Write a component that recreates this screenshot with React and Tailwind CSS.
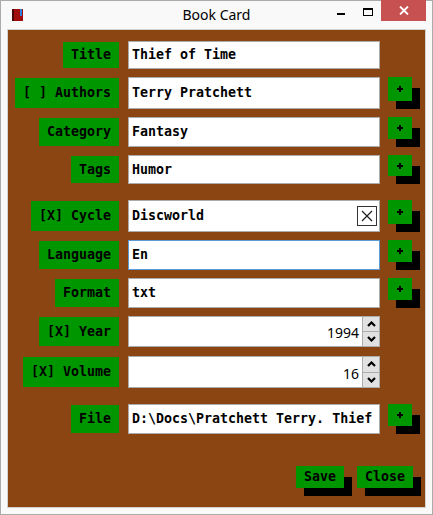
import React from 'react';

const mono = "font-['DejaVu_Sans_Mono','Liberation_Mono',monospace] font-bold text-[13.3px]";

const rows = [
  { label: 'Title', value: 'Thief of Time', h: 'h-[28px]', mt: '' },
  { label: '[ ] Authors', value: 'Terry Pratchett', h: 'h-[32px]', mt: 'mt-[8px]', plus: true },
  { label: 'Category', value: 'Fantasy', h: 'h-[30px]', mt: 'mt-[8px]', plus: true },
  { label: 'Tags', value: 'Humor', h: 'h-[29px]', mt: 'mt-[8px]', plus: true },
  { label: '[X] Cycle', value: 'Discworld', h: 'h-[32px]', mt: 'mt-[16px]', plus: true, clear: true },
  { label: 'Language', value: 'En', h: 'h-[30px]', mt: 'mt-[8px]', plus: true, focus: true },
  { label: 'Format', value: 'txt', h: 'h-[30px]', mt: 'mt-[8px]', plus: true },
  { label: '[X] Year', num: '1994', h: 'h-[31px]', mt: 'mt-[8px]' },
  { label: '[X] Volume', num: '16', h: 'h-[32px]', mt: 'mt-[9px]' },
  { label: 'File', value: 'D:\\Docs\\Pratchett Terry. Thief', h: 'h-[30px]', mt: 'mt-[16px]', plus: true },
];

function PlusButton() {
  return (
    <div className="relative ml-[8px] w-[32px] h-full">
      <div className="absolute left-[8px] top-[11px] right-0 bottom-0 bg-black" />
      <div className="absolute left-0 top-0 w-[24px] bottom-[8px] bg-[#009600] flex items-center justify-center">
        <svg width="6" height="6" viewBox="0 0 6 6">
          <rect x="0" y="2" width="6" height="2" fill="#000" />
          <rect x="2" y="0" width="2" height="6" fill="#000" />
        </svg>
      </div>
    </div>
  );
}

function Chevron({ up }) {
  return (
    <svg width="9" height="6" viewBox="0 0 9 6">
      <polyline
        points={up ? '1,5 4.5,1.5 8,5' : '1,1 4.5,4.5 8,1'}
        fill="none"
        stroke="#000"
        strokeWidth="2.2"
      />
    </svg>
  );
}

function Row({ r }) {
  return (
    <div className={`flex ${r.h} ${r.mt}`}>
      <div className="w-[111px] flex justify-end py-px">
        <div className={`bg-[#009600] px-2 flex items-center text-black ${mono}`}>
          <span className="whitespace-pre">{r.label}</span>
        </div>
      </div>
      {r.num ? (
        <div className="ml-[9px] w-[252px] flex border border-[#ababab] bg-white">
          <div className="flex-1 flex items-center justify-end pr-[3px] pt-[2px] text-[14px] text-black font-['Noto_Sans',sans-serif]">
            {r.num}
          </div>
          <div className="w-[18px] -mr-px -my-px flex flex-col">
            <div className="flex-1 flex items-center justify-center border border-[#acacac] bg-[#e1e1e1]">
              <Chevron up />
            </div>
            <div className="flex-1 -mt-px flex items-center justify-center border border-[#acacac] bg-[#e1e1e1]">
              <Chevron />
            </div>
          </div>
        </div>
      ) : (
        <div
          className={`ml-[9px] w-[252px] flex items-center border bg-white pl-[3px] overflow-hidden ${
            r.focus ? 'border-[#5b9bd5]' : 'border-[#ababab]'
          }`}
        >
          <span className={`flex-1 whitespace-pre text-black ${mono}`}>{r.value}</span>
          {r.clear && (
            <div className="mr-[2px] w-[20px] h-[20px] border border-[#333] bg-white flex items-center justify-center">
              <svg width="12" height="12" viewBox="0 0 12 12">
                <line x1="1" y1="1" x2="11" y2="11" stroke="#222" strokeWidth="1.2" />
                <line x1="11" y1="1" x2="1" y2="11" stroke="#222" strokeWidth="1.2" />
              </svg>
            </div>
          )}
        </div>
      )}
      {r.plus && <PlusButton />}
    </div>
  );
}

function ShadowButton({ children }) {
  return (
    <div className="relative h-[30px]">
      <div className="absolute left-[8px] top-[11px] right-0 bottom-0 bg-black" />
      <div className={`relative mr-[8px] h-[22px] px-2 flex items-center bg-[#009600] text-black ${mono}`}>
        {children}
      </div>
    </div>
  );
}

export default function App() {
  return (
    <div className="w-[433px] h-[515px] border border-[#ababab] bg-[#f9f9f9] flex flex-col">
      {/* title bar */}
      <div className="relative h-[28px] flex items-center justify-center">
        <div className="absolute left-[11px] top-[8px] w-[11px] h-[12px] bg-[#a00d0d] border-l-2 border-[#4a0505]">
          <div className="absolute right-[1px] top-0 w-[2px] h-[7px] bg-[#2d7fe0]" />
        </div>
        <span className="text-[14px] leading-[28px] text-black font-['Noto_Sans',sans-serif]">Book Card</span>
        <div className="absolute left-[336px] top-[12px] w-[8px] h-[2px] bg-black" />
        <div className="absolute left-[362px] top-[7px] w-[10px] h-[8px] border border-t-2 border-black" />
        <div className="absolute left-[380px] -top-px w-[45px] h-[21px] bg-[#c75050] flex items-center justify-center">
          <svg width="10" height="9" viewBox="0 0 10 9">
            <line x1="1" y1="0.5" x2="9" y2="8.5" stroke="#fff" strokeWidth="1.8" />
            <line x1="9" y1="0.5" x2="1" y2="8.5" stroke="#fff" strokeWidth="1.8" />
          </svg>
        </div>
      </div>

      {/* client area */}
      <div className="mx-[6px] h-[479px] border border-[#d2d2d2] bg-[#8b4513] flex flex-col pt-[11px]">
        {rows.map((r) => (
          <Row key={r.label} r={r} />
        ))}
        <div className="mt-[32px] flex justify-end pr-[4px] gap-[5px]">
          <ShadowButton>Save</ShadowButton>
          <ShadowButton>Close</ShadowButton>
        </div>
      </div>
    </div>
  );
}
